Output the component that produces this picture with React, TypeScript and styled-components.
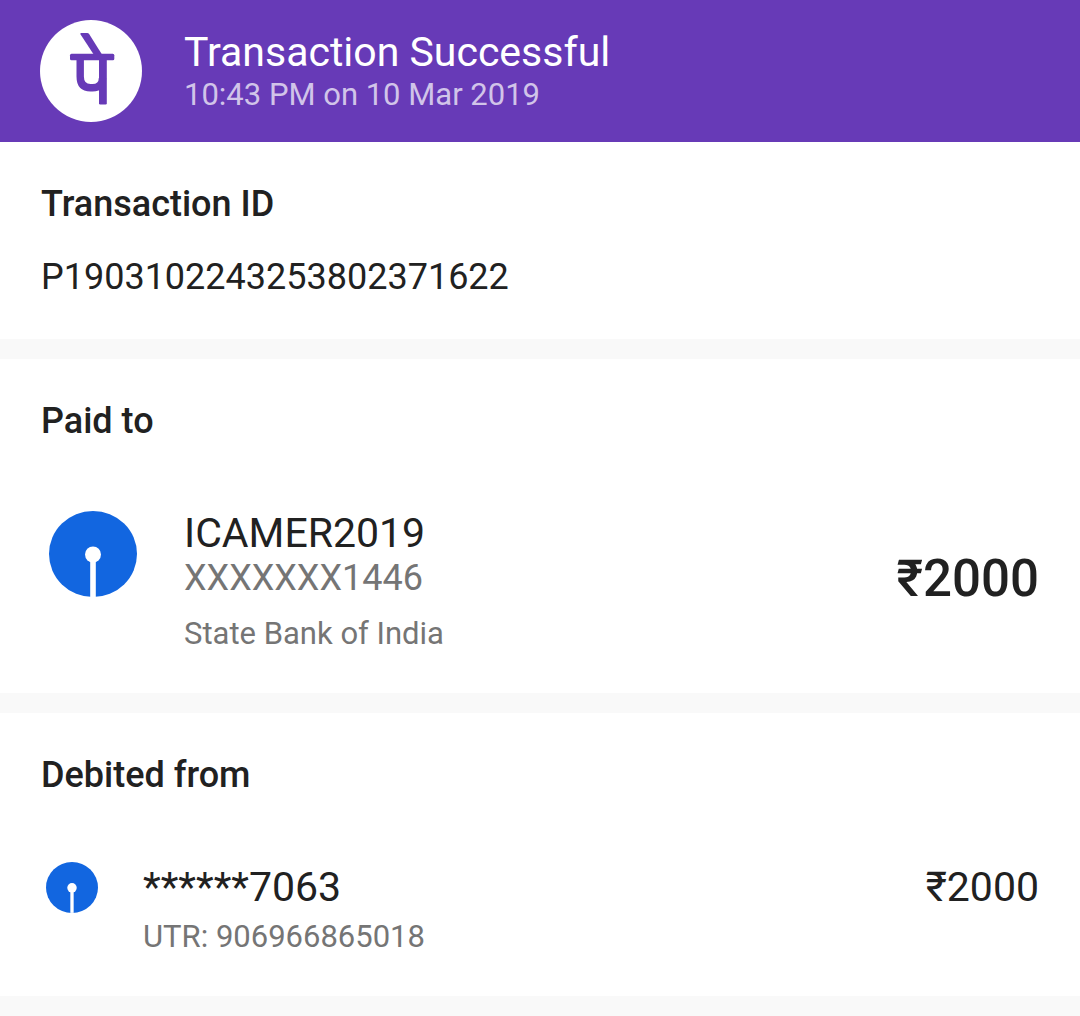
import React from "react";
import styled, { createGlobalStyle } from "styled-components";

const GlobalStyle = createGlobalStyle`
  * {
    box-sizing: border-box;
  }
  body {
    margin: 0;
    background: #f9f9f9;
    color: #212121;
    font-family: Roboto, "Noto Sans", sans-serif;
  }
`;

const Header = styled.header`
  display: flex;
  align-items: center;
  gap: 42px;
  padding: 20px 40px;
  background: #673ab7;
  color: #ffffff;
`;

const BrandLogo = styled.svg`
  flex: none;
  display: block;
  width: 102px;
  height: 102px;
`;

const Title = styled.h1`
  margin: 0;
  font-size: 41px;
  line-height: 48px;
  font-weight: 400;
`;

const Timestamp = styled.p`
  margin: 0;
  font-size: 31px;
  line-height: 38px;
  color: #d1c4e9;
`;

const Section = styled.section`
  padding: 41px;
  margin-bottom: 20px;
  background: #ffffff;
`;

const Heading = styled.h2`
  margin: 0;
  font-size: 36px;
  line-height: 42px;
  font-weight: 500;
`;

const TransactionId = styled.p`
  margin: 31px 0 0;
  font-size: 36px;
  line-height: 42px;
`;

const Entry = styled.div<{ $centered?: boolean }>`
  display: flex;
  align-items: ${(p) => (p.$centered ? "center" : "flex-start")};
  justify-content: space-between;
  margin-top: 67px;
`;

const Party = styled.div`
  display: flex;
  gap: 40px;
`;

const IconSlot = styled.div<{ $large?: boolean }>`
  flex: none;
  display: flex;
  align-items: center;
  width: ${(p) => (p.$large ? 103 : 62)}px;
  height: ${(p) => (p.$large ? 90 : 48)}px;
  padding-left: ${(p) => (p.$large ? 8 : 5)}px;

  svg {
    flex: none;
    width: ${(p) => (p.$large ? 88 : 52)}px;
    height: ${(p) => (p.$large ? 86 : 51)}px;
  }
`;

const Name = styled.p`
  margin: 0;
  font-size: 41px;
  line-height: 48px;
`;

const AccountNumber = styled.p`
  margin: 0;
  font-size: 36px;
  line-height: 42px;
  color: #757575;
`;

const Detail = styled.p<{ $gap: number }>`
  margin: ${(p) => p.$gap}px 0 0;
  font-size: 31px;
  line-height: 36px;
  color: #757575;
`;

const Amount = styled.p<{ $large?: boolean }>`
  margin: 0;
  padding-bottom: ${(p) => (p.$large ? 4 : 0)}px;
  font-size: ${(p) => (p.$large ? 51 : 41)}px;
  line-height: ${(p) => (p.$large ? 60 : 48)}px;
  font-weight: ${(p) => (p.$large ? 500 : 400)};
`;

function PhonePeLogo() {
  return (
    <BrandLogo viewBox="0 0 102 102" role="img" aria-label="PhonePe">
      <circle cx="51" cy="51" r="51" fill="#fff" />
      <g fill="#673ab7">
        <path d="M41 13H47.200Q48.400 13 49.100 14L62 34.500H53.700L40.600 14.500Q39.800 13 41 13Z" />
        <rect x="30" y="33.800" width="44.300" height="6.500" rx="1.500" />
        <path d="M59 38h7.800v45.300q0 1.200-1.200 1.200H60.200q-1.200 0-1.200-1.200Z" />
      </g>
      <path
        d="M40.200 38V56.500Q40.200 67.700 50.500 67.700H52.500Q62.500 67.700 62.500 58"
        fill="none"
        stroke="#673ab7"
        strokeWidth="7.400"
      />
    </BrandLogo>
  );
}

function SbiLogo({ large }: { large?: boolean }) {
  return (
    <IconSlot $large={large}>
      <svg viewBox="0 0 88 86" aria-hidden="true">
        <ellipse cx="44" cy="43" rx="44" ry="43" fill="#1266e0" />
        <circle cx="44" cy="43.500" r="8" fill="#fff" />
        <rect x="41.200" y="47" width="5.600" height="39" fill="#fff" />
      </svg>
    </IconSlot>
  );
}

export default function App() {
  return (
    <>
      <GlobalStyle />
      <Header>
        <PhonePeLogo />
        <div>
          <Title>Transaction Successful</Title>
          <Timestamp>10:43 PM on 10 Mar 2019</Timestamp>
        </div>
      </Header>
      <main>
        <Section>
          <Heading>Transaction ID</Heading>
          <TransactionId>P1903102243253802371622</TransactionId>
        </Section>
        <Section>
          <Heading>Paid to</Heading>
          <Entry $centered>
            <Party>
              <SbiLogo large />
              <div>
                <Name>ICAMER2019</Name>
                <AccountNumber>XXXXXXX1446</AccountNumber>
                <Detail $gap={17}>State Bank of India</Detail>
              </div>
            </Party>
            <Amount $large>₹2000</Amount>
          </Entry>
        </Section>
        <Section>
          <Heading>Debited from</Heading>
          <Entry>
            <Party>
              <SbiLogo />
              <div>
                <Name>******7063</Name>
                <Detail $gap={8}>UTR: 906966865018</Detail>
              </div>
            </Party>
            <Amount>₹2000</Amount>
          </Entry>
        </Section>
      </main>
    </>
  );
}
